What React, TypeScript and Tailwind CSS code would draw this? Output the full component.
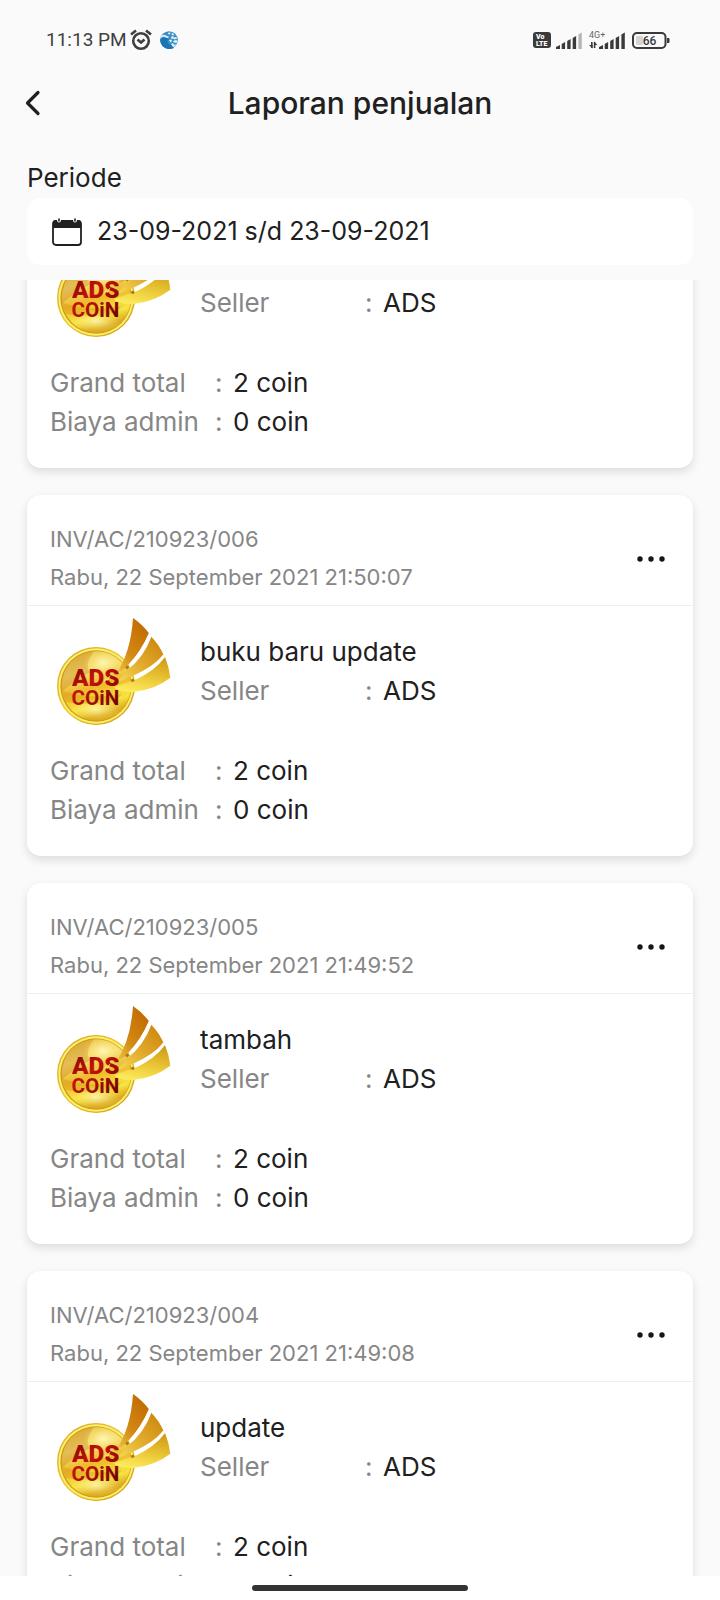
import { useLayoutEffect, useRef } from 'react';

interface Sale {
  id: number;
  invoice?: string;
  date?: string;
  product?: string;
  seller: string;
  total: number;
  adminFee: number;
}

const SALES: Sale[] = [
  { id: 1, seller: 'ADS', total: 2, adminFee: 0 },
  {
    id: 2,
    invoice: 'INV/AC/210923/006',
    date: 'Rabu, 22 September 2021 21:50:07',
    product: 'buku baru update',
    seller: 'ADS',
    total: 2,
    adminFee: 0,
  },
  {
    id: 3,
    invoice: 'INV/AC/210923/005',
    date: 'Rabu, 22 September 2021 21:49:52',
    product: 'tambah',
    seller: 'ADS',
    total: 2,
    adminFee: 0,
  },
  {
    id: 4,
    invoice: 'INV/AC/210923/004',
    date: 'Rabu, 22 September 2021 21:49:08',
    product: 'update',
    seller: 'ADS',
    total: 2,
    adminFee: 0,
  },
];

function SignalBars({ weak }: { weak?: boolean }) {
  return (
    <svg width="26" height="17" viewBox="0 0 26 17" fill="#3a3a3a">
      <path d="M0 17v-2l4-2v4z" />
      <path d="M5.700 17v-5l3.400-2v7z" />
      <path d="M11.200 17V9l3.400-2v10z" />
      <path d="M16.700 17V6l3.400-2v13z" />
      <path d="M22.400 17V2.500l3.400-2V17z" fill={weak ? '#b5b5b5' : '#3a3a3a'} />
    </svg>
  );
}

function StatusBar() {
  return (
    <div className="flex h-20 shrink-0 items-center justify-between pr-[50px] pl-[46px] text-[#3f3f3f]">
      <div className="flex items-center">
        <span className="font-[Roboto,sans-serif] text-[19px] leading-6">11:13 PM</span>
        {/* Alarm */}
        <svg className="ml-[3px]" width="22" height="22" viewBox="0 0 22 22" fill="none" stroke="#3f3f3f" strokeWidth="2.600">
          <circle cx="11" cy="12" r="7.800" />
          <path d="M1 5.500 6 1.500M21 5.500 16 1.500" />
          <path d="M7.500 10.500l3.500 3 3.500-3" />
        </svg>
        {/* App notification */}
        <svg className="ml-2" width="18" height="18" viewBox="0 0 18 18">
          <circle cx="9" cy="9" r="8.800" fill="#3b8fc6" />
          <path d="M0 9q1-2.500 4-2.500 4 0 5 2.500-2 0-1.500 2t4.500 3.500L14 17q-3 1.500-7 .7Q1 16 0 9z" fill="#1f74b4" />
          <path d="M.8 5.500Q3 2.800 5.500 4.200T9 5.500l-1 1.500Q5.500 6.500 4 5.800T.3 7.500zM8.500 1.500l2 .3-.5 1.700-2-.5zM12 2l2 1-.5 1.500-2-.5zM11 6l2-1 1 1.500 2.500-.5.500 1.500-2.500 1-1-1-2 .5zM9 9l2-.5 1 1.500-1.500 1.500zM13 10l3-1 1.500 1-1 2-2.500-.5zM11 13l2-1 1 2 2-1-1 2.500-2 .5z" fill="#e2f1fa" />
        </svg>
      </div>
      <div className="flex items-center">
        {/* VoLTE */}
        <svg width="18" height="16" viewBox="0 0 18 16">
          <rect width="18" height="16" rx="3" fill="#3a3a3a" />
          <text x="3" y="7" fill="#fff" fontFamily="Roboto, sans-serif" fontSize="7" fontWeight="900">Vo</text>
          <text x="3" y="14" fill="#fff" fontFamily="Roboto, sans-serif" fontSize="7" fontWeight="900">LTE</text>
        </svg>
        <div className="ml-[5px] flex">
          <SignalBars weak />
        </div>
        <svg className="ml-[7px]" width="16" height="20" viewBox="0 0 16 20">
          <text x="0" y="8" fill="#666" fontFamily="Roboto, sans-serif" fontSize="9">4G+</text>
          <path d="M2.800 12v6M5.600 18v-6" fill="none" stroke="#3a3a3a" strokeWidth="1.600" />
          <path d="M0 15h3.500v3.500zM8.400 15H5v-3.500z" fill="#3a3a3a" />
        </svg>
        <div className="-ml-[6px] flex">
          <SignalBars />
        </div>
        {/* Battery */}
        <svg className="ml-[7px]" width="38" height="17" viewBox="0 0 38 17">
          <rect x="1" y="1" width="32.500" height="15" rx="4" fill="none" stroke="#3a3a3a" strokeWidth="2" />
          <rect x="4" y="4" width="7" height="9" rx="1.500" fill="#d4d4d4" />
          <path d="M35 6h1.500q1 0 1 1v3q0 1-1 1H35z" fill="#3a3a3a" />
          <text x="17.500" y="13" textAnchor="middle" fill="#3a3a3a" fontFamily="Roboto, sans-serif" fontSize="12" fontWeight="500">66</text>
        </svg>
      </div>
    </div>
  );
}

function CoinLogo() {
  return (
    <svg className="h-28 w-[126px] shrink-0" viewBox="30 51 378 336" role="img" aria-label="ADS COiN">
      <defs>
        <linearGradient id="coinRim" x1="0" y1="0" x2="1" y2="1">
          <stop offset="0" stopColor="#d3a01a" />
          <stop offset=".5" stopColor="#ecc820" />
          <stop offset="1" stopColor="#c4950f" />
        </linearGradient>
        <linearGradient id="coinFace" x1="0" y1="0" x2=".3" y2="1">
          <stop offset="0" stopColor="#e6b838" />
          <stop offset=".35" stopColor="#f7e07a" />
          <stop offset=".6" stopColor="#eeba2c" />
          <stop offset=".85" stopColor="#f8e442" />
          <stop offset="1" stopColor="#dba61c" />
        </linearGradient>
        <radialGradient id="coinGlow">
          <stop offset="0" stopColor="#fffac0" />
          <stop offset="1" stopColor="#f8e25a" stopOpacity="0" />
        </radialGradient>
        <linearGradient id="wingTop" x1=".7" y1="0" x2="0" y2="1">
          <stop offset="0" stopColor="#c26a02" />
          <stop offset=".55" stopColor="#d48a14" />
          <stop offset="1" stopColor="#f0cf4a" />
        </linearGradient>
        <linearGradient id="wingMid" x1="1" y1="0" x2="0" y2="1">
          <stop offset="0" stopColor="#c98208" />
          <stop offset=".5" stopColor="#e0a82a" />
          <stop offset="1" stopColor="#f6dc58" />
        </linearGradient>
        <linearGradient id="wingLow" x1=".8" y1="0" x2=".4" y2="1">
          <stop offset="0" stopColor="#d09a14" />
          <stop offset=".6" stopColor="#eccb3a" />
          <stop offset="1" stopColor="#fbe95a" />
        </linearGradient>
        <linearGradient id="coinText" x1="0" y1="0" x2="1" y2="1">
          <stop offset="0" stopColor="#7a0404" />
          <stop offset=".4" stopColor="#c41208" />
          <stop offset="1" stopColor="#640000" />
        </linearGradient>
      </defs>
      <circle cx="168" cy="255" r="117" fill="url(#coinRim)" />
      <circle cx="168" cy="255" r="113" fill="#fbee70" />
      <circle cx="168" cy="255" r="107" fill="#d09c14" />
      <circle cx="169" cy="255" r="104" fill="url(#coinFace)" />
      <path d="M70 220q30-62 92-69-30 40-12 62-50 30-86 60-2-28 6-53z" fill="#c88a20" opacity=".4" />
      <path d="M66 268q70 30 180 12-20 26-70 30-66 0-100-8z" fill="#c98412" opacity=".3" />
      <ellipse cx="190" cy="185" rx="62" ry="42" fill="url(#coinGlow)" opacity=".9" />
      <ellipse cx="168" cy="325" rx="82" ry="34" fill="url(#coinGlow)" opacity=".8" />
      <path d="M279 51Q307 70 327 97Q306 150 262 198L226 222Q272 158 279 51z" fill="url(#wingTop)" />
      <path d="M334 107Q358 132 371 162Q338 198 280 224L228 246L262 208Q314 165 334 107z" fill="url(#wingMid)" />
      <path d="M375 168Q388 200 391 230Q345 266 280 273Q232 276 222 258L282 238Q345 210 375 168z" fill="url(#wingLow)" />
      <path d="M330 98Q308 150 268 194M373 163Q338 206 286 232" fill="none" stroke="#fff" strokeWidth="8" />
      <circle cx="262" cy="199" r="5" fill="#b4770e" />
      <circle cx="278" cy="238" r="5" fill="#b4770e" />
      <text textAnchor="middle" fill="url(#coinText)" fontFamily="Roboto, sans-serif" fontWeight="900">
        <tspan x="167" y="255" fontSize="73">ADS</tspan>
        <tspan x="166" y="311" fontSize="62" fontWeight="700">COiN</tspan>
      </text>
      <path d="M190 246l8-18 2 6 12-12-8 18-3-4z" fill="#f8e25a" />
    </svg>
  );
}

function Detail({ label, value }: { label: string; value: string }) {
  return (
    <div className="flex leading-[39px]">
      <dt className="flex w-[183px] text-[#868686]">
        <span className="w-[165px] whitespace-nowrap">{label}</span>
        <span>:</span>
      </dt>
      <dd>{value}</dd>
    </div>
  );
}

function SaleCard({ sale }: { sale: Sale }) {
  return (
    <article className="rounded-[14px] bg-white shadow-[0_4px_10px_rgba(0,0,0,0.12)]">
      {sale.invoice && (
        <header className="flex items-center justify-between border-b border-[#eeeeee] px-[23px] pt-[25px] pb-[9px]">
          <div className="text-[22px] leading-[38px] text-[#868686]">
            <p>{sale.invoice}</p>
            <p>{sale.date}</p>
          </div>
          <button type="button" aria-label="Menu" className="py-2 pl-4">
            <svg width="38" height="12" viewBox="0 0 38 12" fill="#161616">
              <circle cx="8" cy="7" r="2.700" />
              <circle cx="19" cy="7" r="2.700" />
              <circle cx="30" cy="7" r="2.700" />
            </svg>
          </button>
        </header>
      )}
      <div className="px-[23px] pt-3 pb-[27px]">
        <div className="mb-[21px] flex gap-6">
          <CoinLogo />
          <div className="pt-[14px]">
            <h2 className="h-[39px] leading-[39px]">{sale.product}</h2>
            <dl>
              <Detail label="Seller" value={sale.seller} />
            </dl>
          </div>
        </div>
        <dl>
          <Detail label="Grand total" value={`${sale.total} coin`} />
          <Detail label="Biaya admin" value={`${sale.adminFee} coin`} />
        </dl>
      </div>
    </article>
  );
}

export default function App() {
  const listRef = useRef<HTMLElement>(null);

  // Open the report part way down the first sale
  useLayoutEffect(() => {
    if (listRef.current) listRef.current.scrollTop = 62;
  }, []);

  return (
    <div className="flex h-screen flex-col bg-[#fafafa] font-[Inter,sans-serif] text-[26px] text-[#202020]">
      <StatusBar />

      {/* App bar */}
      <div className="grid h-[46px] shrink-0 grid-cols-[48px_1fr_48px] items-center">
        <button type="button" aria-label="Kembali" className="flex justify-center pl-[18px]">
          <svg width="16" height="26" viewBox="0 0 16 26" fill="none" stroke="#202020" strokeWidth="3.200" strokeLinecap="round" strokeLinejoin="round">
            <path d="M13 2.500 2.500 13 13 23.500" />
          </svg>
        </button>
        <h1 className="text-center text-[30px] leading-[46px] font-medium">Laporan penjualan</h1>
      </div>

      {/* Period filter */}
      <div className="shrink-0 px-[27px] pt-8 pb-[15px]">
        <label htmlFor="periode" className="block leading-10">
          Periode
        </label>
        <div className="flex h-[67px] items-center gap-[15px] rounded-[14px] bg-white px-[25px]">
          <svg className="shrink-0" width="30" height="28" viewBox="0 0 30 28">
            <rect x="1" y="3" width="28" height="24" rx="3" fill="none" stroke="#202020" strokeWidth="1.800" />
            <path d="M1 10V5q0-3 3-3h22q3 0 3 3v5z" fill="#202020" />
            <circle cx="7" cy="2.500" r="1.900" fill="#fff" />
            <circle cx="23" cy="2.500" r="1.900" fill="#fff" />
            <path d="M7 .5v3M23 .5v3" stroke="#202020" strokeWidth="1.600" />
          </svg>
          <input
            id="periode"
            type="text"
            readOnly
            defaultValue="23-09-2021 s/d 23-09-2021"
            className="w-full min-w-0 bg-transparent text-[25px] outline-none"
          />
        </div>
      </div>

      <main ref={listRef} className="min-h-0 flex-1 overflow-y-auto px-[27px] [scrollbar-width:none]">
        <div className="flex flex-col gap-[27px] pb-[27px]">
          {SALES.map((sale) => (
            <SaleCard key={sale.id} sale={sale} />
          ))}
        </div>
      </main>

      {/* Gesture bar */}
      <div className="flex h-6 shrink-0 items-center justify-center bg-white">
        <div className="h-[6px] w-[30%] rounded-full bg-[#333333]" />
      </div>
    </div>
  );
}
